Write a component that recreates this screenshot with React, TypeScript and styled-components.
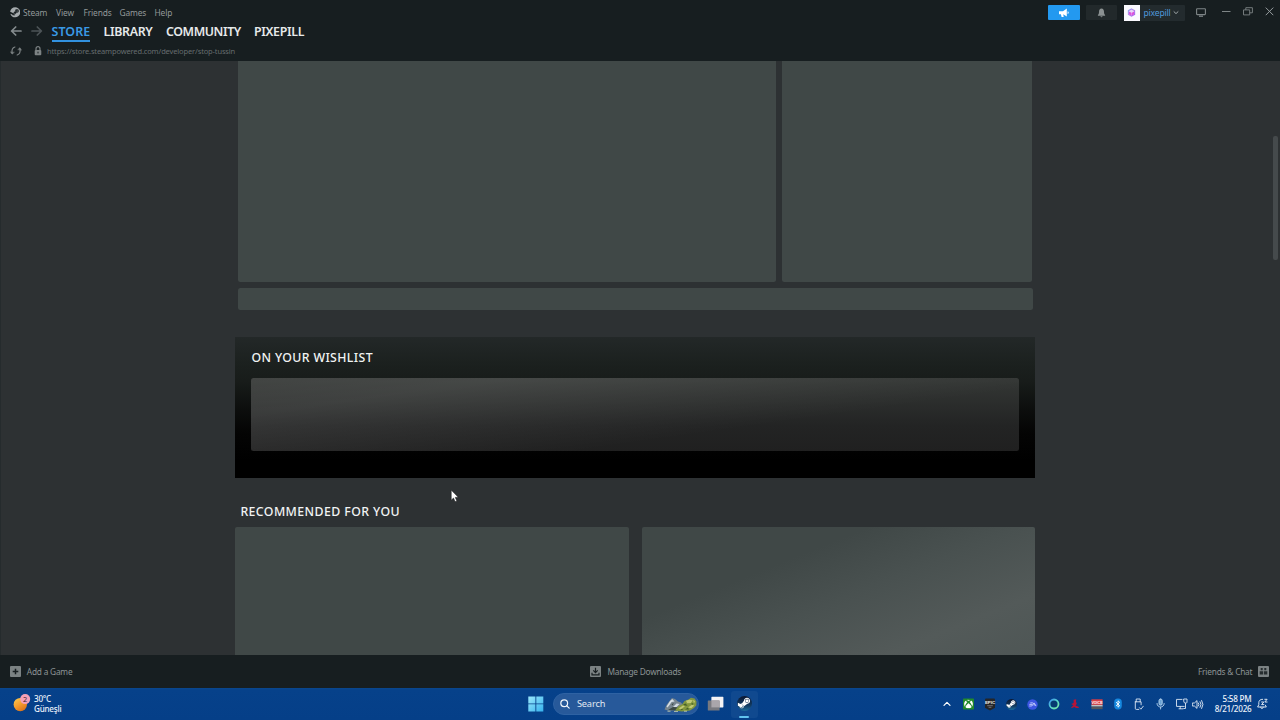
import React from "react";
import styled, { createGlobalStyle } from "styled-components";
import { FaSteam, FaSteamSymbol, FaXbox } from "react-icons/fa";

const Global = createGlobalStyle`
  * { box-sizing: border-box; }
  body { margin: 0; background: #2d3133; overflow: hidden; }
  svg { display: block; flex: none; }
`;

const Screen = styled.div`
  position: relative;
  width: 1280px;
  height: 720px;
  display: flex;
  flex-direction: column;
  overflow: hidden;
  font-family: "Noto Sans", sans-serif;
  background: #2d3133;
`;

/* ---------- header ---------- */
const Header = styled.header`
  height: 61px;
  display: flex;
  justify-content: space-between;
  background: #171e20;
  flex: none;
`;
const HeaderLeft = styled.div`
  display: flex;
  flex-direction: column;
  padding-top: 3px;
`;
const MenuRow = styled.div`
  height: 19px;
  padding-left: 9.5px;
  display: grid;
  grid-template-columns: 13.5px 33px 27.5px 36px 35px 30px;
  align-items: center;
  color: #929899;
`;
const MenuItem = styled.span`
  font-size: 8.4px;
  line-height: 12px;
  white-space: nowrap;
  letter-spacing: -0.12px;
`;
const NavRow = styled.div`
  height: 19px;
  padding-left: 9.5px;
  display: grid;
  grid-template-columns: 21.5px 20.5px 52px 62.5px 88px 60px;
  align-items: start;
  color: #878d8e;
`;
const ArrowSlot = styled.div`
  padding-top: 3px;
`;
const NavItem = styled.span<{ $active?: boolean; $track: number }>`
  justify-self: start;
  font-size: 12.4px;
  font-weight: 600;
  line-height: 17px;
  height: 19px;
  margin-top: 1px;
  white-space: nowrap;
  letter-spacing: ${(p) => p.$track}px;
  color: ${(p) => (p.$active ? "#3a9ae6" : "#e6e9ea")};
  border-bottom: 2px solid ${(p) => (p.$active ? "#3191df" : "transparent")};
`;
const UrlRow = styled.div`
  height: 20px;
  padding-left: 10px;
  display: grid;
  grid-template-columns: 24px 13px 220px;
  align-items: center;
  color: #7d8384;
`;
const Url = styled.span`
  font-size: 7.5px;
  line-height: 12px;
  color: #666d6f;
  white-space: nowrap;
  letter-spacing: -0.14px;
`;

const WindowBar = styled.div`
  display: flex;
  align-items: center;
  height: 15px;
  margin-top: 5px;
  padding-right: 5px;
  color: #7e8586;
`;
const NewsButton = styled.div`
  width: 32px;
  height: 15.5px;
  margin-right: 6px;
  background: #2399f0;
  color: #fff;
  border-radius: 1px;
  display: grid;
  place-items: center;
`;
const BellButton = styled.div`
  width: 31px;
  height: 15px;
  margin-right: 7px;
  background: #22292b;
  color: #8b9192;
  border-radius: 1px;
  display: grid;
  place-items: center;
`;
const Account = styled.div`
  width: 61px;
  height: 16px;
  margin-right: 11px;
  display: flex;
  align-items: center;
  background: #232b2e;
  border-radius: 1px;
`;
const Avatar = styled.div`
  width: 16px;
  height: 16px;
  background: #fbfaff;
  display: grid;
  place-items: center;
`;
const AccountName = styled.span`
  margin-left: 4px;
  width: 29px;
  font-size: 8.6px;
  line-height: 14px;
  color: #4f98dc;
  white-space: nowrap;
  letter-spacing: -0.2px;
`;
const ControlSlot = styled.div<{ $w: number }>`
  width: ${(p) => p.$w}px;
  display: flex;
`;

/* ---------- store page ---------- */
const Page = styled.main`
  height: 594px;
  flex: none;
  display: flex;
  overflow: hidden;
  border-left: 1px solid #252b2d;
  background: #2d3133;
`;
const Column = styled.div`
  width: 800px;
  margin-left: 234.4px;
  display: flex;
  flex-direction: column;
`;
const HeroRow = styled.div`
  height: 221.5px;
  padding: 0 2.5px;
  display: grid;
  grid-template-columns: 538.5px 250.5px;
  gap: 5.5px;
`;
const Skeleton = styled.div<{ $corners?: string; $shine?: boolean }>`
  border-radius: ${(p) => p.$corners ?? "2.5px"};
  background: ${(p) =>
    p.$shine
      ? "linear-gradient(158deg, #404847 0%, #404847 32%, #495150 53%, #535a59 79%, #4e5655 100%)"
      : "#404847"};
`;
const Strip = styled(Skeleton)`
  height: 22.5px;
  margin: 5.5px 2.5px 0;
`;
const Wishlist = styled.section`
  height: 141px;
  margin-top: 27px;
  padding: 0 16px;
  background: linear-gradient(180deg, #232828 0%, #1b201e 20%, #181c1a 31%, #0d0f0e 50%, #040404 68%, #000 88%);
`;
const Heading = styled.h2<{ $track: number }>`
  margin: 0;
  font-size: 12.3px;
  font-weight: 500;
  line-height: 18px;
  color: #f1f3f3;
  white-space: nowrap;
  letter-spacing: ${(p) => p.$track}px;
`;
const WishHeading = styled(Heading)`
  padding: 11.6px 0 10.9px;
`;
const WishBox = styled.div`
  height: 73px;
  border-radius: 2.5px;
  background:
    linear-gradient(172deg, rgba(255, 255, 255, 0.07) 0%, rgba(255, 255, 255, 0.09) 20%, rgba(255, 255, 255, 0.055) 38%, rgba(255, 255, 255, 0) 66%),
    linear-gradient(180deg, #343735 0%, #2b2d2c 35%, #232424 65%, #202020 100%);
`;
const RecHeading = styled(Heading)`
  padding: 24.6px 0 5.9px 5px;
`;
const RecRow = styled.div`
  height: 128.5px;
  display: grid;
  grid-template-columns: 393.5px 393.5px;
  gap: 13px;
`;
const ScrollTrack = styled.div`
  margin-left: auto;
  width: 7px;
  padding-top: 75px;
`;
const ScrollThumb = styled.div`
  width: 4.5px;
  height: 124px;
  border-radius: 2px;
  background: #454a4c;
`;

/* ---------- client footer ---------- */
const Footer = styled.footer`
  height: 33px;
  flex: none;
  display: grid;
  grid-template-columns: 579.7px 1fr 82px;
  align-items: center;
  padding: 0 0 0 10px;
  background: #171e20;
`;
const FooterItem = styled.div<{ $gap: number; $track: number }>`
  display: flex;
  align-items: center;
  gap: ${(p) => p.$gap}px;
  color: #8c9394;
  font-size: 8.3px;
  line-height: 12px;
  white-space: nowrap;
  letter-spacing: ${(p) => p.$track}px;
`;

/* ---------- taskbar ---------- */
const Taskbar = styled.div`
  height: 32px;
  flex: none;
  display: flex;
  align-items: center;
  color: #fff;
  background: linear-gradient(180deg, #0a478d 0, #06418a 2px, #053f88 100%);
`;
const Weather = styled.div`
  width: 528.4px;
  padding-left: 13.4px;
  display: flex;
  align-items: center;
  gap: 1.6px;
`;
const TwoLines = styled.div<{ $right?: boolean }>`
  display: flex;
  flex-direction: column;
  text-align: ${(p) => (p.$right ? "right" : "left")};
  font-size: 8.1px;
  font-weight: 500;
  line-height: 10.5px;
  color: #edf3fa;
  white-space: nowrap;
  letter-spacing: -0.22px;
`;
const SearchPill = styled.div`
  width: 146px;
  height: 22px;
  margin-left: 8.5px;
  padding-left: 6.6px;
  border-radius: 11px;
  display: flex;
  align-items: center;
  background: #27599a;
  border: 1px solid #2e62a3;
  overflow: hidden;
`;
const SearchText = styled.span`
  width: 88px;
  margin-left: 6.4px;
  font-size: 9.2px;
  line-height: 14px;
  color: #e0e8f2;
  letter-spacing: -0.12px;
`;
const TaskButton = styled.div`
  margin-left: 8px;
`;
const ActiveTask = styled.div`
  width: 27px;
  height: 27px;
  margin-left: 7px;
  padding-top: 5px;
  border-radius: 3px;
  background: #10498f;
  display: flex;
  flex-direction: column;
  align-items: center;
  justify-content: space-between;
`;
const Indicator = styled.div`
  width: 10px;
  height: 2px;
  border-radius: 1px;
  background: #61c3f0;
`;
const Tray = styled.div`
  margin-left: auto;
  display: flex;
  align-items: center;
  padding-right: 11.5px;
`;
const TrayCell = styled.div<{ $w?: number }>`
  width: ${(p) => p.$w ?? 21.35}px;
  display: flex;
  justify-content: center;
`;
const Clock = styled(TrayCell)`
  justify-content: flex-end;
  padding-right: 4px;
`;
const SteamDisc = styled.div<{ $size: number }>`
  width: ${(p) => p.$size}px;
  height: ${(p) => p.$size}px;
  border-radius: 50%;
  display: grid;
  place-items: center;
  background: linear-gradient(180deg, #0b1630, #123c63 65%, #1d6d9b);
`;
const Pointer = styled.svg`
  position: absolute;
  left: 450px;
  top: 489px;
`;

const stroke = { fill: "none", stroke: "currentColor", strokeLinecap: "round" as const, strokeLinejoin: "round" as const };

const Arrow = ({ flip, dim }: { flip?: boolean; dim?: boolean }) => (
  <ArrowSlot>
    <svg width="12" height="12" viewBox="0 0 12 12" {...stroke} strokeWidth="1.7" color={dim ? "#4d5457" : "#858c8e"}>
      <path d={flip ? "M1 6h9.2M6.3 2 10.4 6l-4.1 4" : "M11 6H1.6M5.7 2 1.6 6l4.1 4"} />
    </svg>
  </ArrowSlot>
);
const Reload = () => (
  <svg width="12" height="12" viewBox="0 0 12 12" {...stroke} strokeWidth="1.2">
    <path d="M4.9 2C2.7 2.6 1.6 4.8 2.1 8M7.2 10C9.5 9.3 10.5 7.2 10 4.2" />
    <path d="M.4 6.9 2.1 9.2 4.3 7.4zM7.8 4.5 9.9 2.6l1.7 2.5z" fill="currentColor" strokeWidth=".3" />
  </svg>
);
const Lock = () => (
  <svg width="8" height="10" viewBox="0 0 8 10">
    <path d="M2 4.3V2.7a2 2 0 0 1 4 0v1.6" fill="none" stroke="currentColor" strokeWidth="1.2" />
    <rect x=".7" y="4" width="6.6" height="5.3" rx="1" fill="currentColor" />
    <path d="M4 5.7v1.7" stroke="#171e20" strokeWidth="1" />
  </svg>
);
const Megaphone = () => (
  <svg width="12" height="10" viewBox="0 0 12 10" fill="currentColor">
    <path d="M1 3.2h4L8.8.6v8L5.2 6.3l.5 2.8H3.6L2.9 6.3H1zM9.6 3.2c1.5.2 1.5 2.6 0 2.8z" />
  </svg>
);
const Bell = () => (
  <svg width="9" height="10" viewBox="0 0 9 10" fill="currentColor">
    <path d="M4.5.6C2.8.8 2 2 2 3.7 2 5.7 1.6 6 .9 7v.7h7.2V7C7.4 6 7 5.7 7 3.7 7 2 6.2.8 4.5.6zM3.4 8.2h2.2c-.2 1.3-2 1.3-2.2 0z" />
  </svg>
);
const AvatarMark = () => (
  <svg width="9" height="9" viewBox="0 0 9 9">
    <defs>
      <linearGradient id="av" x1="0" y1="0" x2="1" y2="1">
        <stop offset="0" stopColor="#8fa2ee" />
        <stop offset=".5" stopColor="#b787ea" />
        <stop offset="1" stopColor="#a45cf0" />
      </linearGradient>
    </defs>
    <path d="M4.5 1 7.6 2.7v3.6L4.5 8 1.4 6.3V2.7z" fill="#e9d6fb" stroke="url(#av)" strokeWidth="1.1" />
    <path d="M2 3.6 4.5 4.8v2.7L2 6.2zM7 3.6v2.6L4.9 7.4V4.8z" fill="#dd52dc" />
  </svg>
);
const Monitor = () => (
  <svg width="10" height="9" viewBox="0 0 10 9" fill="none" stroke="currentColor" strokeWidth="1.1">
    <rect x=".6" y=".7" width="8.8" height="5.9" rx=".6" />
    <path d="M3 8.2h4" strokeWidth="1.3" />
  </svg>
);

const WeatherIcon = () => (
  <svg width="19" height="20" viewBox="0 0 19 20">
    <defs>
      <linearGradient id="sun" x1=".2" y1="0" x2=".8" y2="1">
        <stop offset="0" stopColor="#fbc64d" />
        <stop offset=".5" stopColor="#f39a2c" />
        <stop offset="1" stopColor="#d56c17" />
      </linearGradient>
    </defs>
    <circle cx="7.3" cy="10.6" r="6.7" fill="url(#sun)" />
    <circle cx="12.2" cy="5.1" r="5" fill="#f3a0b7" />
    <text x="12.2" y="7.8" textAnchor="middle" fontSize="7.4" fontFamily="Noto Sans, sans-serif" fill="#3d1d2c">2</text>
  </svg>
);
const WindowsLogo = () => (
  <svg width="16" height="16" viewBox="0 0 16 16">
    <defs>
      <linearGradient id="win" x1="0" y1="0" x2="1" y2="1">
        <stop offset="0" stopColor="#9be8fb" />
        <stop offset="1" stopColor="#36b2ee" />
      </linearGradient>
    </defs>
    <path d="M.3.4h7.1v7H.3zM8.3.4h7v7h-7zM.3 8.3h7.1v7.2H.3zM8.3 8.3h7v7.2h-7z" fill="url(#win)" />
  </svg>
);
const SearchArt = () => (
  <svg width="35" height="18" viewBox="0 0 35 18">
    <path d="M1.5 14.5 3.5 10l3-4L9 3l3 1 3 2.5 3 1L20 10l-2 4-8 1.5-5 0z" fill="#77858f" />
    <path d="M3.5 11.5 7 6l2.2-2 2.4 2.5-3 .5L6.5 10l-2 2.5zM10 12l3.5-3.5 3 .5-3 3z" fill="#d5dde3" />
    <path d="M5 15l5-3 6 .5-2 3zM8.5 9l2.5-.8-1.5 2.4z" fill="#3d4a44" />
    <path d="M12 15.5 15.5 11l3.5-1.5L21.5 6l4-1.5L28 2.8l3.6.8 1.9 2.9-.2 4L31 13l-4 2.5-8 1z" fill="#84983e" />
    <path d="M23 5.8l3.3-1 3.5.4-2 2.7-3.6.4zM15.5 13.5l4.5-3 2 .8-4 3zM25 12.5l4-2.7 2.3.8-3 2.6zM30 5l2 1-1 2.6z" fill="#c0c873" />
    <path d="M20 9.5l2.6-1 2 2.3-2.6-.4zM22 14.6l3-2 1 1.8zM28 8.8l2.4-.8-.9 1.9zM17 15.2l2-1.5 1 1.4z" fill="#46602a" />
    <path d="M4.5 16.2h3M11 16.4h4M21 16.2h3" stroke="#d8dcb4" strokeWidth=".8" />
  </svg>
);
const TaskViewIcon = () => (
  <svg width="17" height="16" viewBox="0 0 17 16">
    <rect x="4.4" y=".8" width="12" height="10.6" rx=".6" fill="#f4f3f5" />
    <rect x=".8" y="4.4" width="11.8" height="10.2" rx=".6" fill="#78797f" />
    <path d="M4.4 4.4h8.2v7H4.4z" fill="#aaa6ab" />
  </svg>
);

const VoiceIcon = () => (
  <svg width="12" height="11" viewBox="0 0 12 11">
    <rect x=".4" y=".3" width="11.2" height="5.6" fill="#dc3d43" />
    <text x="6" y="4.5" textAnchor="middle" fontSize="3.6" fontWeight="700" fontFamily="Liberation Sans, sans-serif" fill="#fff">VOICE</text>
    <path d="M.4 5.9h11.2v1.7H.4z" fill="#c7c2bd" />
    <path d="M.4 7.6h11.2v2.6H.4z" fill="#56565b" />
  </svg>
);
const EpicIcon = () => (
  <svg width="12" height="13" viewBox="0 0 12 13">
    <path d="M1 1.5Q1 .5 2 .5h8q1 0 1 1v8.2L6 12.4 1 9.7z" fill="#252527" />
    <text x="6" y="6" textAnchor="middle" fontSize="4.4" fontWeight="700" fontFamily="Liberation Sans, sans-serif" fill="#eee">EPIC</text>
    <path d="M3.2 7.7h5.6M4.6 9.3h2.8" stroke="#a5a5a8" strokeWidth=".6" />
  </svg>
);

export default function App() {
  return (
    <>
      <Global />
      <Screen>
        <Header>
          <HeaderLeft>
            <MenuRow>
              <FaSteam size={10.5} color="#a5abad" />
              <MenuItem>Steam</MenuItem>
              <MenuItem>View</MenuItem>
              <MenuItem>Friends</MenuItem>
              <MenuItem>Games</MenuItem>
              <MenuItem>Help</MenuItem>
            </MenuRow>
            <NavRow>
              <Arrow />
              <Arrow flip dim />
              <NavItem $active $track={0.1}>STORE</NavItem>
              <NavItem $track={-0.33}>LIBRARY</NavItem>
              <NavItem $track={-0.42}>COMMUNITY</NavItem>
              <NavItem $track={-0.33}>PIXEPILL</NavItem>
            </NavRow>
            <UrlRow>
              <Reload />
              <Lock />
              <Url>https://store.steampowered.com/developer/stop-tussin</Url>
            </UrlRow>
          </HeaderLeft>
          <WindowBar>
            <NewsButton><Megaphone /></NewsButton>
            <BellButton><Bell /></BellButton>
            <Account>
              <Avatar><AvatarMark /></Avatar>
              <AccountName>pixepill</AccountName>
              <svg width="6" height="5" viewBox="0 0 6 5" {...stroke} strokeWidth="1" color="#a1a8aa">
                <path d="M1 1.7 3 3.6 5 1.7" />
              </svg>
            </Account>
            <ControlSlot $w={26.5}><Monitor /></ControlSlot>
            <ControlSlot $w={21}>
              <svg width="9" height="10" viewBox="0 0 9 10"><path d="M0 3.5h8.5" stroke="currentColor" strokeWidth="1" /></svg>
            </ControlSlot>
            <ControlSlot $w={22}>
              <svg width="10" height="11" viewBox="0 0 10 11" fill="none" stroke="currentColor" strokeWidth=".9">
                <path d="M.5 2.9h6.2v5H.5zM2.8 2.9V.7h6.6v5.1H6.7" />
              </svg>
            </ControlSlot>
            <ControlSlot $w={10}>
              <svg width="9" height="11" viewBox="0 0 9 11" {...stroke} strokeWidth="1" color="#989ea0">
                <path d="M1 .9l7 7M8 .9l-7 7" />
              </svg>
            </ControlSlot>
          </WindowBar>
        </Header>

        <Page>
          <Column>
            <HeroRow>
              <Skeleton $corners="0 0 2.5px 2.5px" />
              <Skeleton $corners="0 0 2.5px 2.5px" />
            </HeroRow>
            <Strip />
            <Wishlist>
              <WishHeading $track={0.38}>ON YOUR WISHLIST</WishHeading>
              <WishBox />
            </Wishlist>
            <RecHeading $track={0.42}>RECOMMENDED FOR YOU</RecHeading>
            <RecRow>
              <Skeleton $corners="2px 2px 0 0" />
              <Skeleton $corners="2px 2px 0 0" $shine />
            </RecRow>
          </Column>
          <ScrollTrack><ScrollThumb /></ScrollTrack>
        </Page>

        <Footer>
          <FooterItem $gap={5.8} $track={-0.2}>
            <svg width="11" height="11" viewBox="0 0 11 11">
              <rect width="11" height="11" rx="1" fill="#7b8283" />
              <path d="M5.5 2.7v5.6M2.7 5.5h5.6" stroke="#171e20" strokeWidth="1.5" />
            </svg>
            Add a Game
          </FooterItem>
          <FooterItem $gap={6.8} $track={-0.24}>
            <svg width="11" height="11" viewBox="0 0 11 11" fill="none">
              <rect width="11" height="11" rx="1" fill="#7b8283" />
              <path d="M5.5 1.7v4.6M3.3 4.4l2.2 2.2 2.2-2.2M2 6.7v2.1h7V6.7" stroke="#171e20" strokeWidth="1.2" />
            </svg>
            Manage Downloads
          </FooterItem>
          <FooterItem $gap={5.6} $track={-0.2}>
            Friends &amp; Chat
            <svg width="11" height="11" viewBox="0 0 11 11">
              <rect width="11" height="11" rx="1" fill="#7b8283" />
              <path d="M2.7 2h2v2.2h-2zM6.3 2h2v2.2h-2zM1.7 5.3h3.4v3.2H1.7zM5.9 5.3h3.4v3.2H5.9z" fill="#262d2f" />
            </svg>
          </FooterItem>
        </Footer>

        <Taskbar>
          <Weather>
            <WeatherIcon />
            <TwoLines><span>30°C</span><span>Güneşli</span></TwoLines>
          </Weather>
          <WindowsLogo />
          <SearchPill>
            <svg width="10" height="10" viewBox="0 0 10 10" {...stroke} strokeWidth="1.2" color="#eef4fa">
              <circle cx="4.2" cy="4.2" r="3.4" />
              <path d="M6.8 6.8 9.2 9.2" />
            </svg>
            <SearchText>Search</SearchText>
            <SearchArt />
          </SearchPill>
          <TaskButton><TaskViewIcon /></TaskButton>
          <ActiveTask>
            <SteamDisc $size={15}><FaSteamSymbol size={14} color="#fff" /></SteamDisc>
            <Indicator />
          </ActiveTask>

          <Tray>
            <TrayCell>
              <svg width="8" height="6" viewBox="0 0 8 6" {...stroke} strokeWidth="1.2"><path d="M1 4.4 4 1.4l3 3" /></svg>
            </TrayCell>
            <TrayCell>
              <svg width="11" height="12" viewBox="0 0 11 12">
                <rect y=".5" width="11" height="11" rx=".7" fill="#218a2b" />
                <FaXbox x="1" y="1.5" size={9} color="#fff" />
              </svg>
            </TrayCell>
            <TrayCell><EpicIcon /></TrayCell>
            <TrayCell><SteamDisc $size={11}><FaSteamSymbol size={10} color="#fff" /></SteamDisc></TrayCell>
            <TrayCell>
              <svg width="11" height="11" viewBox="0 0 11 11">
                <circle cx="5.5" cy="5.5" r="5.2" fill="#3c55e2" />
                <path d="M3.3 3.9h2.6M2.4 5.4h2.8M2.2 7h2.6L7 3.9 9 7M6.5 5.9h1.7" stroke="#dce3ff" strokeWidth=".8" fill="none" />
              </svg>
            </TrayCell>
            <TrayCell>
              <svg width="12" height="12" viewBox="0 0 12 12">
                <defs>
                  <linearGradient id="ring" x1="0" y1="0" x2="1" y2="1">
                    <stop offset="0" stopColor="#3a8ef0" />
                    <stop offset=".5" stopColor="#58d8ca" />
                    <stop offset="1" stopColor="#7ae6a0" />
                  </linearGradient>
                </defs>
                <circle cx="6" cy="6" r="4.5" fill="#073a70" stroke="url(#ring)" strokeWidth="1.8" />
              </svg>
            </TrayCell>
            <TrayCell>
              <svg width="10" height="10" viewBox="0 0 10 10">
                <path d="M3.6.7 6.2.3 6 2.7 6.8 4.8 5.6 6.4l2.9 1.4.5 1.3H6.3L4.2 7.9 2 9 1 8.4 3.4 6.2 1.2 4.9l2.4-.8z" fill="#b51538" />
              </svg>
            </TrayCell>
            <TrayCell><VoiceIcon /></TrayCell>
            <TrayCell>
              <svg width="8" height="12" viewBox="0 0 8 12">
                <rect x=".2" y=".6" width="7.6" height="10.8" rx="3.6" fill="#1688df" />
                <path d="M2 4.1 5.7 7.7 4 9.2V2.8l1.7 1.5L2 7.9" fill="none" stroke="#fff" strokeWidth=".9" />
              </svg>
            </TrayCell>
            <TrayCell>
              <svg width="10" height="13" viewBox="0 0 10 13" {...stroke} strokeWidth=".9" color="#dce7f3">
                <path d="M2.2 3.8V1h4v2.8M1.3 3.8h5.8v3M1.3 3.8v6.6q0 1 1 1h2.5M5.5 9.7l1.4 1.5L9.3 8.2" />
              </svg>
            </TrayCell>
            <TrayCell>
              <svg width="9" height="12" viewBox="0 0 9 12" {...stroke} strokeWidth=".9" color="#b9d6ef">
                <rect x="3" y="1" width="3.2" height="6.2" rx="1.6" fill="#6ba3d4" />
                <path d="M1 5.5c0 4.8 7.2 4.8 7.2 0M4.6 9.2V11" />
              </svg>
            </TrayCell>
            <TrayCell $w={20}>
              <svg width="13" height="12" viewBox="0 0 13 12" {...stroke} strokeWidth=".9" color="#dce7f3">
                <path d="M7 1.4H1.5v7h7.7M4 10.8h4M5.2 8.4v2.2M9 1h3v3.3q-.3.9-1.5.9T9 4.3zM10.5 5.2v5.3H8.8" />
              </svg>
            </TrayCell>
            <TrayCell $w={13}>
              <svg width="12" height="11" viewBox="0 0 12 11" {...stroke} strokeWidth=".9" color="#e5edf6">
                <path d="M.7 4h1.7L5 1.6v7.8L2.4 7H.7zM6.5 4q1 1.5 0 3M8.1 2.7q2 2.8 0 5.6M9.7 1.5q2.7 4 0 8" />
              </svg>
            </TrayCell>
            <Clock $w={51}>
              <TwoLines $right><span>5:58 PM</span><span>8/21/2026</span></TwoLines>
            </Clock>
            <svg width="13" height="12" viewBox="0 0 13 12" {...stroke} strokeWidth=".95" color="#e5edf6">
              <path d="M6.6 1.3C4.2 1.2 2.8 2.7 2.8 4.7v2L1.6 9h8.7L9.4 7.2M4.7 9.2c.2 2 2.3 2 2.5 0M5.6 4h2.2L5.6 6.6h2.2M8.8 1.3h2.3L8.8 4h2.3" />
            </svg>
          </Tray>
        </Taskbar>

        <Pointer width="10" height="14" viewBox="0 0 10 14">
          <path d="M1.2 1v10.2l2.3-2.1 1.6 3.6 1.8-.8-1.6-3.5 3-.2z" fill="#fff" stroke="#1c1f20" strokeWidth=".6" />
        </Pointer>
      </Screen>
    </>
  );
}
